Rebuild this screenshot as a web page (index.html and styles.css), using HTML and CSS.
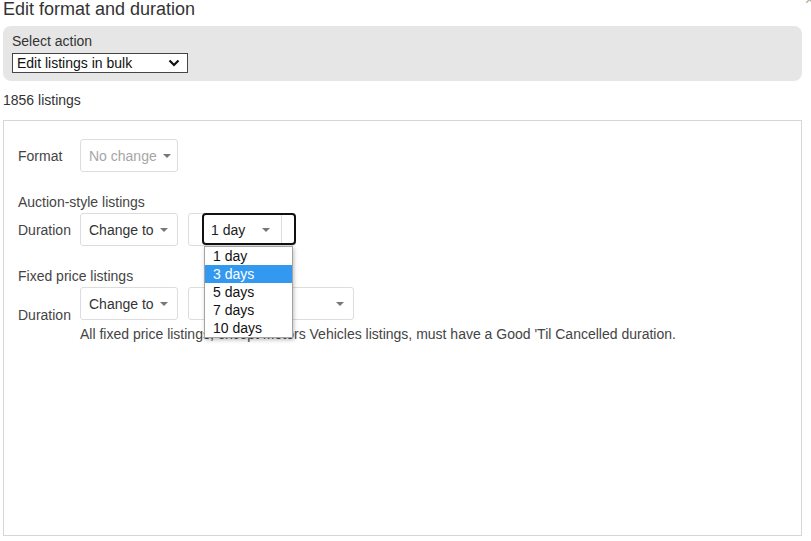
FILE: index.html
```html
<!DOCTYPE html>
<html>
	<head>
		<meta charset="UTF-8">
		<title>Edit format and duration</title>
		<link rel="stylesheet" href="styles.css">
	</head>
	<body>
		<div class="page">
			<span class="close">&times;</span>
			<h1 class="title">Edit format and duration</h1>

			<div class="action-box">
				<div class="action-label">Select action</div>
				<div class="action-select">
					<span>Edit listings in bulk</span>
					<svg class="chevron" width="12" height="8" viewBox="0 0 12 8">
						<path d="M1.5 1.5 L6 6 L10.5 1.5" fill="none" stroke="#111" stroke-width="2.2"/>
					</svg>
				</div>
			</div>

			<div class="count">1856 listings</div>

			<div class="panel">
				<div class="row">
					<div class="label">Format</div>
					<div class="select muted">No change <i class="caret"></i></div>
				</div>

				<div class="group-title">Auction-style listings</div>
				<div class="row">
					<div class="label">Duration</div>
					<div class="select">Change to <i class="caret"></i></div>
					<div class="split">
						<div class="focus">
							<span class="focus-text">1 day</span>
							<i class="caret"></i>
							<span class="focus-cell"></span>
							<ul class="listbox">
								<li>1 day</li>
								<li class="selected">3 days</li>
								<li>5 days</li>
								<li>7 days</li>
								<li>10 days</li>
							</ul>
						</div>
					</div>
				</div>

				<div class="group-title">Fixed price listings</div>
				<div class="row">
					<div class="label">Duration</div>
					<div class="stack">
						<div class="controls">
							<div class="select">Change to <i class="caret"></i></div>
							<div class="select wide"><i class="caret"></i></div>
						</div>
						<div class="hint">All fixed price listings, except Motors Vehicles listings, must have a Good 'Til Cancelled duration.</div>
					</div>
				</div>
			</div>
		</div>
	</body>
</html>
```

FILE: styles.css
```css
body {
	margin: 0;
	font-family: "Liberation Sans", Arial, sans-serif;
	color: #333;
	background: #fff;
}

.page {
	position: relative;
	padding: 0 9px 0 3px;
}

.close {
	position: absolute;
	right: -3px;
	top: -9px;
	font-size: 16px;
	color: #aaa;
}

.title {
	margin: 0;
	font-size: 18px;
	line-height: 18px;
	font-weight: normal;
	color: #333;
}

.action-box {
	margin-top: 8px;
	height: 55px;
	box-sizing: border-box;
	padding: 6px 9px 0;
	background: #e6e6e6;
	border-radius: 8px;
}

.action-label {
	font-size: 14px;
	line-height: 18px;
	color: #333;
}

.action-select {
	margin-top: 3px;
	width: 176px;
	height: 20px;
	box-sizing: border-box;
	border: 1px solid #444;
	background: #fff;
	display: flex;
	align-items: center;
	justify-content: space-between;
	padding: 0 7px 0 4px;
	font-size: 14px;
	color: #111;
}

.count {
	margin-top: 10px;
	font-size: 14px;
	line-height: 18px;
}

.panel {
	margin-top: 11px;
	height: 416px;
	box-sizing: border-box;
	border: 1px solid #d6d6d6;
	padding: 18px 14px 0;
	font-size: 14px;
}

.row {
	display: flex;
	align-items: center;
}

.label {
	width: 62px;
	line-height: 18px;
	color: #444;
}

.group-title {
	margin-top: 21px;
	margin-bottom: 2px;
	line-height: 18px;
	color: #444;
}

.select {
	width: 98px;
	height: 33px;
	box-sizing: border-box;
	border: 1px solid #ddd;
	border-radius: 3px;
	display: flex;
	align-items: center;
	padding-left: 8px;
	color: #333;
	background: #fff;
}

.select.muted {
	color: #a6a6a6;
}

.select.wide {
	width: 166px;
	margin-left: 10px;
	justify-content: flex-end;
	padding-right: 9px;
}

.caret {
	display: inline-block;
	width: 0;
	height: 0;
	margin-left: 6px;
	border-left: 4px solid transparent;
	border-right: 4px solid transparent;
	border-top: 4px solid #777;
}

.split {
	margin-left: 10px;
	width: 108px;
	height: 33px;
	box-sizing: border-box;
	border: 1px solid #ddd;
	border-radius: 3px;
	display: flex;
}

.focus {
	position: relative;
	margin: -1px -1px 0 13px;
	flex: 1;
	box-sizing: border-box;
	border: 2px solid #111;
	border-radius: 4px;
	display: flex;
	align-items: center;
	padding: 1px 0 0 7px;
	color: #222;
}

.focus-text {
	width: 51px;
}

.focus .caret {
	margin-left: 0;
}

.focus-cell {
	margin-left: auto;
	width: 12px;
	align-self: stretch;
	margin-top: -1px;
	border-left: 1px solid #ddd;
}

.listbox {
	position: absolute;
	left: 0;
	top: 31px;
	width: 89px;
	margin: 0;
	padding: 0;
	list-style: none;
	box-sizing: border-box;
	border: 1px solid #a3a3a3;
	background: #fff;
	box-shadow: 1px 2px 4px rgba(0, 0, 0, 0.25);
	z-index: 2;
}

.listbox li {
	height: 18px;
	line-height: 18px;
	padding-left: 8px;
	color: #111;
}

.listbox li.selected {
	background: #3399f0;
	color: #fff;
}

.stack {
	display: flex;
	flex-direction: column;
}

.controls {
	display: flex;
}

.hint {
	margin-top: 5px;
	line-height: 18px;
	color: #444;
}
```
